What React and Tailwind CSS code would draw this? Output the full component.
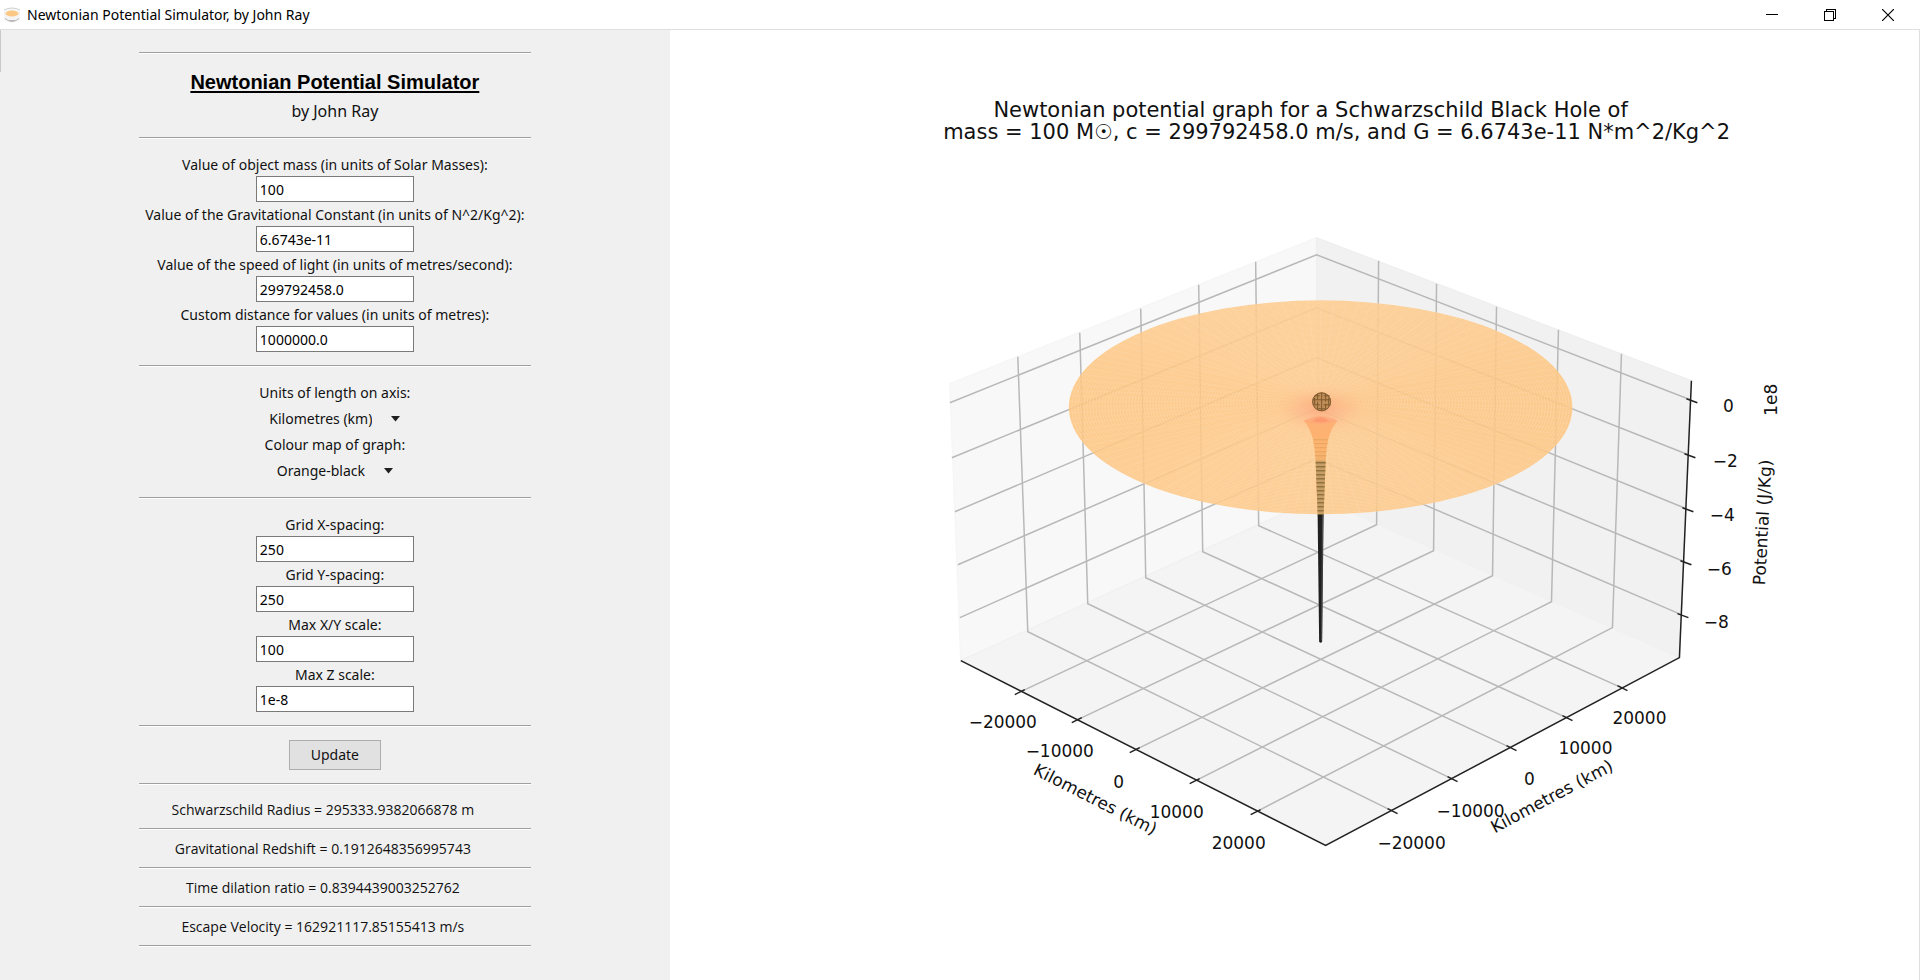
import { useState } from "react";

const physicsFields = [
    { id: "mass", label: "Value of object mass (in units of Solar Masses):", value: "100" },
    { id: "gravity", label: "Value of the Gravitational Constant (in units of N^2/Kg^2):", value: "6.6743e-11" },
    { id: "light", label: "Value of the speed of light (in units of metres/second):", value: "299792458.0" },
    { id: "distance", label: "Custom distance for values (in units of metres):", value: "1000000.0" },
];

const gridFields = [
    { id: "grid-x", label: "Grid X-spacing:", value: "250" },
    { id: "grid-y", label: "Grid Y-spacing:", value: "250" },
    { id: "max-xy", label: "Max X/Y scale:", value: "100" },
    { id: "max-z", label: "Max Z scale:", value: "1e-8" },
];

const results = [
    "Schwarzschild Radius = 295333.9382066878 m",
    "Gravitational Redshift = 0.1912648356995743",
    "Time dilation ratio = 0.8394439003252762",
    "Escape Velocity = 162921117.85155413 m/s",
];

// wall top -> back edge of the floor -> front edge of the floor
const leftGrid = [
    [[1018, 357], [1028, 632], [1392, 811]],
    [[1080, 333], [1088, 604], [1452, 779]],
    [[1141, 309], [1146, 578], [1511, 748]],
    [[1199, 285], [1203, 552], [1567, 718]],
    [[1256, 262], [1259, 526], [1622, 688]],
];

const rightGrid = [
    [[1379, 261], [1377, 525], [1021, 692]],
    [[1437, 284], [1434, 551], [1078, 720]],
    [[1497, 307], [1493, 576], [1136, 750]],
    [[1559, 330], [1552, 602], [1196, 781]],
    [[1622, 354], [1613, 628], [1257, 812]],
];

// left edge -> back corner -> z axis
const levels = [
    [[950, 403], [1317, 255], [1691, 400]],
    [[952, 458], [1317, 308], [1689, 455]],
    [[955, 512], [1317, 358], [1687, 509]],
    [[958, 565], [1317, 409], [1685, 562]],
    [[960, 618], [1317, 459], [1682, 615]],
];

const tickLabels = [
    ["−20000", 1003, 728],
    ["−10000", 1060, 757],
    ["0", 1119, 788],
    ["10000", 1177, 818],
    ["20000", 1239, 849],
    ["−20000", 1412, 849],
    ["−10000", 1471, 817],
    ["0", 1530, 785],
    ["10000", 1586, 754],
    ["20000", 1640, 724],
    ["0", 1729, 412],
    ["−2", 1726, 467],
    ["−4", 1723, 521],
    ["−6", 1720, 575],
    ["−8", 1717, 628],
];

const rings = Array.from({ length: 84 }, (_, i) => (i + 1) / 84);
const spokes = Array.from({ length: 120 }, (_, i) => (i * Math.PI) / 60);
const stripes = Array.from({ length: 14 }, (_, i) => 464 + i * 4);

const toPoints = (line) => line.map((p) => p.join(",")).join(" ");

function Separator() {
    return <hr className="h-0.5 w-full border-t border-b border-t-[#a0a0a0] border-b-white" />;
}

function Field({ id, label, value }) {
    return (
        <div className="flex flex-col items-center">
            <label htmlFor={id} className="h-6 leading-[26px] whitespace-nowrap">{label}</label>
            <input
                id={id}
                type="text"
                defaultValue={value}
                className="h-[26px] w-[158px] border border-[#7a7a7a] bg-white px-[3px] text-black outline-none"
            />
        </div>
    );
}

function Dropdown({ id, label, options }) {
    const [value, setValue] = useState(options[0]);
    return (
        <>
            <label htmlFor={id} className="h-[26px] leading-[26px]">{label}</label>
            <div className="relative flex h-[26px] items-center">
                <select
                    id={id}
                    value={value}
                    onChange={(e) => setValue(e.target.value)}
                    className="field-sizing-content appearance-none bg-transparent pr-7 outline-none"
                >
                    {options.map((o) => (
                        <option key={o}>{o}</option>
                    ))}
                </select>
                <svg viewBox="0 0 9 6" className="pointer-events-none absolute right-0 h-1.5 w-[9px]">
                    <path d="M0 0h9L4.500 5.500z" fill="#1f1f1f" />
                </svg>
            </div>
        </>
    );
}

function TitleBar() {
    return (
        <header className="flex h-[30px] items-center border-b border-[#dfdfdf] bg-white pr-[3px] pl-[3px]">
            <svg viewBox="0 0 18 18" className="h-[18px] w-[18px]">
                <path d="M1 5 9 2.500 17 5v9l-8 3-8-3z" fill="#f4f4f4" />
                <path d="M1 4q8-4 16 0" fill="none" stroke="#cfcfcf" />
                <path d="M2 12.500q7 6 14 0M5.500 14.500h7" fill="none" stroke="#b9b9b9" />
                <ellipse cx="9" cy="7.500" rx="6.500" ry="3" fill="#fdc884" />
            </svg>
            <h1 className="ml-1.5 text-sm text-black">Newtonian Potential Simulator, by John Ray</h1>
            <div className="ml-auto flex h-full text-black">
                <button aria-label="Minimize" className="flex w-[58px] items-center justify-center">
                    <svg viewBox="0 0 12 12" className="h-3 w-3" shapeRendering="crispEdges">
                        <path d="M0 5.500h12" stroke="currentColor" />
                    </svg>
                </button>
                <button aria-label="Restore" className="flex w-[58px] items-center justify-center">
                    <svg viewBox="0 0 12 12" className="h-3 w-3" fill="none" shapeRendering="crispEdges">
                        <path d="M.5 2.500h9v9h-9zM2.500 2.500v-2h9v9h-2" stroke="currentColor" />
                    </svg>
                </button>
                <button aria-label="Close" className="flex w-[58px] items-center justify-center">
                    <svg viewBox="0 0 12 12" className="h-3 w-3">
                        <path d="M0 0l12 12M12 0 0 12" stroke="currentColor" strokeWidth="1.200" />
                    </svg>
                </button>
            </div>
        </header>
    );
}

function Controls() {
    return (
        <aside className="flex w-[34.9%] shrink-0 justify-center bg-[#f0f0f0] pt-[22px] pb-7">
            <div className="flex w-[392px] flex-col items-center text-[#111]">
                <Separator />
                <div className="flex flex-col items-center gap-[3px] py-3.5">
                    <h2 className="font-['Liberation_Sans',Arial,sans-serif] text-xl leading-7 font-bold text-black underline decoration-2 underline-offset-2">
                        Newtonian Potential Simulator
                    </h2>
                    <p className="text-base leading-6">by John Ray</p>
                </div>
                <Separator />
                <div className="py-[13px]">
                    {physicsFields.map((f) => (
                        <Field key={f.id} {...f} />
                    ))}
                </div>
                <Separator />
                <div className="flex flex-col items-center py-[13px]">
                    <Dropdown id="units" label="Units of length on axis:" options={["Kilometres (km)", "Metres (m)"]} />
                    <Dropdown id="cmap" label="Colour map of graph:" options={["Orange-black", "Viridis"]} />
                </div>
                <Separator />
                <div className="py-[13px]">
                    {gridFields.map((f) => (
                        <Field key={f.id} {...f} />
                    ))}
                </div>
                <Separator />
                <div className="py-[13px]">
                    <button className="h-[30px] w-[92px] border border-[#adadad] bg-[#e1e1e1]">Update</button>
                </div>
                <Separator />
                <div className="w-full pt-1.5">
                    {results.map((r) => (
                        <div key={r}>
                            <p className="pr-6 text-center font-['Open_Sans','Segoe_UI',sans-serif] leading-[37px]">{r}</p>
                            <Separator />
                        </div>
                    ))}
                </div>
            </div>
        </aside>
    );
}

function Surface() {
    return (
        <g>
            <ellipse cx="1321" cy="407.500" rx="252" ry="107" fill="#fdc47e" fillOpacity="0.88" />
            {/* mesh, pulled slightly towards the back by the perspective */}
            <g fill="none" stroke="#fff" strokeOpacity="0.2" strokeWidth="0.800">
                {rings.map((t) => (
                    <ellipse key={t} cx="1321" cy={402 + 5.5 * t * t} rx={252 * t} ry={107 * t} />
                ))}
            </g>
            <g stroke="#fff" strokeOpacity="0.11" strokeWidth="0.800">
                {spokes.map((a, i) => {
                    const inner = [0.08, 0.3, 0.16, 0.4][i % 4];
                    return (
                        <line
                            key={a}
                            x1={1321 + 252 * inner * Math.cos(a)}
                            y1={403 + 107 * inner * Math.sin(a)}
                            x2={1321 + 252 * Math.cos(a)}
                            y2={407.5 + 107 * Math.sin(a)}
                        />
                    );
                })}
            </g>
            <ellipse cx="1321" cy="409" rx="64" ry="32" fill="url(#glow)" />
            <path
                d="M1304 421C1314 431 1315 448 1316 462L1318 515H1324L1326 462C1327 448 1328 431 1338 421Z"
                fill="url(#funnel)"
            />
            <path d="M1316 461h10l-2 54h-6z" fill="#c79e66" />
            <g stroke="#92733f" strokeWidth="1.500">
                {stripes.map((y) => (
                    <line key={y} x1={1316 + (y - 462) * 0.04} x2={1326 - (y - 462) * 0.04} y1={y - 1} y2={y - 1} />
                ))}
            </g>
            <g stroke="#d59b59" strokeOpacity="0.6">
                <path d="M1314 440h14M1314 444h14M1315 448h12M1315 452h12M1315 456h12" />
            </g>
            <path d="M1304 421q17-9 34 0-17 6-34 0z" fill="#fda679" fillOpacity="0.75" />
            <path d="M1313 421q8-7 16 0-8 3-16 0z" fill="#fb9268" fillOpacity="0.7" />
            <path d="M1318 515h6l-1.500 127q-1.500 2-3 0z" fill="#1f201f" />
            <path d="M1323 515l-1 126" stroke="#5a5a58" strokeWidth="0.800" />

            <circle cx="1322" cy="402" r="9.500" fill="#c08f57" />
            <g fill="none" stroke="#80592f" strokeWidth="1">
                <circle cx="1322" cy="402" r="9" />
                <path d="M1313 400h18M1314 405h6M1324 405h6M1315 396h5M1324 396h6M1318 409h8" />
                <path d="M1322 393v18M1318 394v6M1318 402v8M1326 394v8M1326 404v6M1315 398v7M1329 398v8" />
            </g>
        </g>
    );
}

function PotentialPlot() {
    return (
        <svg
            viewBox="670 30 1250 949"
            role="img"
            aria-label="Newtonian potential graph"
            className="h-auto w-full font-['DejaVu_Sans',Verdana,sans-serif]"
        >
            <defs>
                <radialGradient id="glow">
                    <stop offset="0" stopColor="#fb9a75" stopOpacity="0.65" />
                    <stop offset="0.400" stopColor="#fdae84" stopOpacity="0.4" />
                    <stop offset="0.700" stopColor="#fdbc88" stopOpacity="0.12" />
                    <stop offset="1" stopColor="#fdc995" stopOpacity="0" />
                </radialGradient>
                <linearGradient id="funnel" x1="0" y1="0" x2="0" y2="1">
                    <stop offset="0" stopColor="#fdb074" />
                    <stop offset="0.300" stopColor="#fdb46e" />
                    <stop offset="0.450" stopColor="#eeb06c" />
                </linearGradient>
            </defs>

            <g strokeWidth="1.500">
                <path d="M950 384 961 661 1318 498 1317 238z" fill="#f8f8f8" stroke="#f6f6f6" />
                <path d="M1692 381 1680 658 1318 498 1317 238z" fill="#f1f1f1" stroke="#efefef" />
                <path d="M961 661 1326 846 1680 658 1318 498z" fill="#f4f4f4" stroke="#f1f1f1" />
            </g>

            <g fill="none" stroke="#b8b8b8" strokeWidth="1.500">
                {[...leftGrid, ...rightGrid, ...levels].map((line) => (
                    <polyline key={toPoints(line)} points={toPoints(line)} />
                ))}
            </g>

            <g fill="none" stroke="#222" strokeWidth="1.500">
                <path d="M961 661 1326 846 1680 658 1692 381" />
                {rightGrid.map(([, , [x, y]]) => (
                    <path key={x} d={`M${x - 6} ${y + 3}l10-5`} />
                ))}
                {leftGrid.map(([, , [x, y]]) => (
                    <path key={x} d={`M${x - 4} ${y - 2}l10 5`} />
                ))}
                {levels.map(([, , [x, y]]) => (
                    <path key={y} d={`M${x - 4} ${y - 1}l11 4`} />
                ))}
            </g>

            <Surface />

            <g fill="#111" textAnchor="middle">
                <text x="1311" y="117" fontSize="21">Newtonian potential graph for a Schwarzschild Black Hole of</text>
                <text x="1337" y="139" fontSize="21">
                    mass = 100 M☉, c = 299792458.0 m/s, and G = 6.6743e-11 N*m^2/Kg^2
                </text>
                {tickLabels.map(([text, x, y]) => (
                    <text key={`${x}-${y}`} x={x} y={y} fontSize="17">{text}</text>
                ))}
                <text fontSize="17" transform="translate(1093 805) rotate(27)">Kilometres (km)</text>
                <text fontSize="17" transform="translate(1555 802) rotate(-28)">Kilometres (km)</text>
                <text fontSize="17" transform="translate(1769 523) rotate(-87)">Potential (J/Kg)</text>
                <text fontSize="17" transform="translate(1778 400) rotate(-90)">1e8</text>
            </g>
        </svg>
    );
}

export default function App() {
    return (
        <div className="flex min-h-screen flex-col bg-white font-['Noto_Sans','Segoe_UI',sans-serif] text-sm">
            <TitleBar />
            <div className="relative flex flex-1 border-r border-[#dfdfdf]">
                <div className="absolute top-0 left-0 h-[42px] w-px bg-[#c8c8c8]" />
                <Controls />
                <main className="min-w-0 flex-1">
                    <PotentialPlot />
                </main>
            </div>
        </div>
    );
}
